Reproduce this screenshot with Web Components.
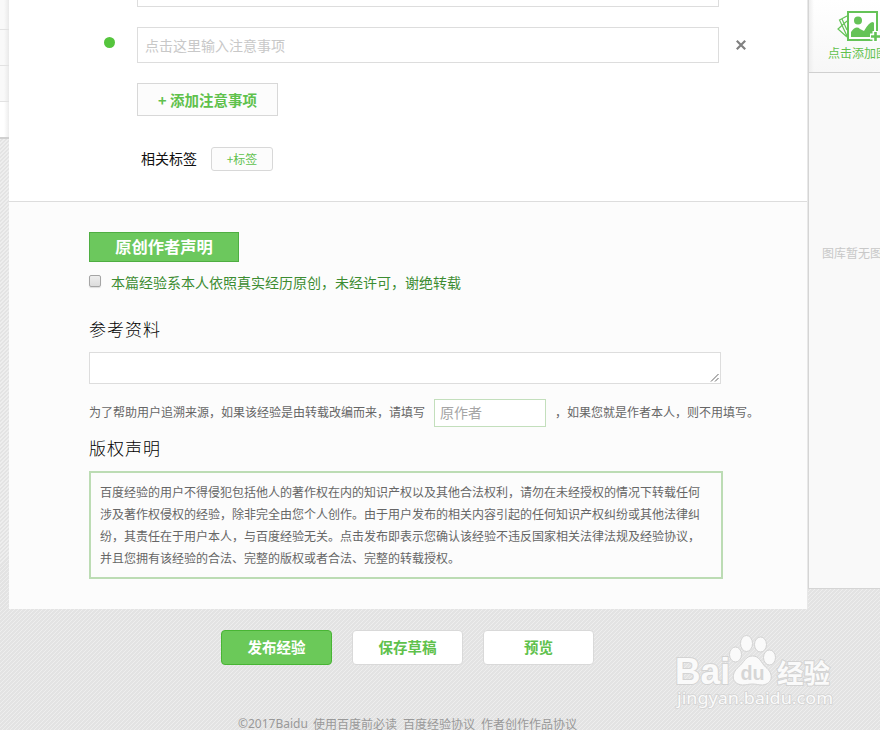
<!DOCTYPE html>
<html lang="zh-CN">
<head>
<meta charset="utf-8">
<title>百度经验</title>
<style>
  * { box-sizing: border-box; }
  body {
    margin: 0;
    width: 880px;
    height: 730px;
    overflow: hidden;
    position: relative;
    color: #666;
    font: 12px/22px "Noto Sans CJK SC", sans-serif;
    background: repeating-linear-gradient(135deg, #e3e3e3 0 1.9px, #eee 1.9px 2.83px);
  }
  .page { display: flex; height: 609px; align-items: flex-start; }
</style>
</head>
<body>
<div class="page">
  <side-steps></side-steps>
  <exp-editor></exp-editor>
  <photo-library></photo-library>
</div>
<action-bar>
  <exp-button primary>发布经验</exp-button>
  <exp-button>保存草稿</exp-button>
  <exp-button>预览</exp-button>
</action-bar>
<page-footer></page-footer>
<exp-logo></exp-logo>

<script>
function define(name, html) {
  customElements.define(name, class extends HTMLElement {
    connectedCallback() {
      this.attachShadow({ mode: 'open' });
      this.shadowRoot.innerHTML = '<style>*{box-sizing:border-box}</style>' + html;
    }
  });
}

define('exp-button', `
  <style>
    :host {
      display: block;
      box-sizing: border-box;
      width: 111px;
      height: 35px;
      border: 1px solid #d9d9d9;
      border-radius: 4px;
      background: #fff;
      color: #5fc14c;
      font-size: 14.5px;
      font-weight: bold;
      line-height: 32px;
      text-align: center;
    }
    :host([primary]) { background: #6bc959; border-color: #48b534; color: #fff; }
  </style>
  <slot></slot>
`);

define('action-bar', `
  <style>
    :host { display: flex; gap: 20px; padding: 21px 0 0 221px; }
  </style>
  <slot></slot>
`);

// left navigation, only its right edge is on screen
define('side-steps', `
  <style>
    :host { display: block; flex: none; width: 9px; }
    .step { height: 36px; border-bottom: 1px solid #e2e2e2; background: linear-gradient(90deg, #f9f9f9 4px, #e9e9e9); }
    .step.first { height: 30px; }
    .step.on { background: linear-gradient(90deg, #fff 4px, #ececec); border-bottom: 2px solid #d0d0d0; height: 37px; }
  </style>
  <div class="step first"></div>
  <div class="step"></div>
  <div class="step"></div>
  <div class="step on"></div>
`);

define('note-item', `
  <style>
    :host { display: flex; align-items: center; height: 36px; margin-top: 20px; }
    .dot { width: 11px; height: 11px; border-radius: 50%; background: #55c53d; margin: 0 22px 6px 95px; }
    .input {
      width: 582px;
      height: 36px;
      margin-right: 17px;
      padding-left: 7px;
      border: 1px solid #ddd;
      background: #fff;
      color: #c8c8c8;
      font-size: 14px;
      line-height: 35px;
    }
  </style>
  <div class="dot"></div>
  <div class="input"><slot></slot></div>
  <svg width="10" height="10"><path d="M.8.8l8.400 8.400M9.200.8L.8 9.200" stroke="#808080" stroke-width="2.2"/></svg>
`);

define('notes-section', `
  <style>
    :host { display: block; height: 202px; background: #fff; border-bottom: 1px solid #ddd; }
    .prev { height: 7px; width: 582px; margin-left: 128px; border: 1px solid #ddd; border-top: 0; }
    .add {
      width: 141px;
      height: 33px;
      margin: 20px 0 0 128px;
      border: 1px solid #d8d8d8;
      background: #fcfcfc;
      color: #5fc14c;
      font-size: 14.5px;
      font-weight: bold;
      line-height: 31px;
      text-align: center;
    }
    .tags { display: flex; align-items: center; gap: 14px; margin: 31px 0 0 132px; height: 24px; color: #111; font-size: 14px; line-height: 22px; }
    .name { margin-bottom: 2px; }
    .tag {
      width: 62px;
      height: 24px;
      border: 1px solid #d8d8d8;
      border-radius: 3px;
      background: #fcfcfc;
      color: #5fc14c;
      font-size: 12px;
      text-align: center;
    }
  </style>
  <div class="prev"></div>
  <note-item>点击这里输入注意事项</note-item>
  <div class="add">+ 添加注意事项</div>
  <div class="tags"><span class="name">相关标签</span><span class="tag">+标签</span></div>
`);

define('statement-section', `
  <style>
    :host { display: block; height: 407px; padding: 30px 0 0 80px; background: #fcfcfc; }
    .badge {
      width: 150px;
      height: 30px;
      border: 1px solid #4fae42;
      background: #6cc85d;
      color: #fff;
      font-size: 16.3px;
      font-weight: bold;
      line-height: 27px;
      text-align: center;
    }
    .agree { display: flex; align-items: center; gap: 10px; height: 22px; margin-top: 9px; color: #3c8c32; font-size: 14px; }
    .check {
      width: 12px;
      height: 12px;
      margin-bottom: 3px;
      border: 1px solid #a5a5a5;
      border-radius: 2px;
      background: linear-gradient(#eee, #dcdcdc);
      box-shadow: 0 1px 1px #ddd;
    }
    h3 { margin: 0; height: 24px; color: #000; font-size: 17px; letter-spacing: 1px; font-weight: 300; line-height: 24px; }
    .refs { margin-top: 24px; }
    .area {
      display: flex;
      align-items: flex-end;
      justify-content: flex-end;
      width: 632px;
      height: 32px;
      margin-top: 11px;
      padding: 1px;
      border: 1px solid #ddd;
      background: #fff;
    }
    .source { display: flex; align-items: center; height: 28px; margin-top: 15px; line-height: 20px; white-space: nowrap; }
    .text { margin-bottom: 2px; }
    .author {
      width: 112px;
      height: 28px;
      margin: 0 9px;
      padding-left: 5px;
      border: 1px solid #c3dfbc;
      background: #fff;
      color: #a5a5a5;
      font-size: 14px;
      line-height: 25px;
    }
    .copy { margin-top: 9px; }
    .legal {
      width: 634px;
      height: 108px;
      margin-top: 11px;
      padding: 8px 9px;
      border: 2px solid #bcdcb4;
      white-space: nowrap;
    }
  </style>
  <div class="badge">原创作者声明</div>
  <div class="agree"><span class="check"></span><span>本篇经验系本人依照真实经历原创，未经许可，谢绝转载</span></div>
  <h3 class="refs">参考资料</h3>
  <div class="area"><svg width="9" height="9"><path d="M1 8.5L8.5 1M5 8.5L8.5 5" stroke="#555" stroke-width=".9"/></svg></div>
  <div class="source">
    <span class="text">为了帮助用户追溯来源，如果该经验是由转载改编而来，请填写</span>
    <span class="author">原作者</span>
    <span class="text">，如果您就是作者本人，则不用填写。</span>
  </div>
  <h3 class="copy">版权声明</h3>
  <div class="legal">百度经验的用户不得侵犯包括他人的著作权在内的知识产权以及其他合法权利，请勿在未经授权的情况下转载任何<br>涉及著作权侵权的经验，除非完全由您个人创作。由于用户发布的相关内容引起的任何知识产权纠纷或其他法律纠<br>纷，其责任在于用户本人，与百度经验无关。点击发布即表示您确认该经验不违反国家相关法律法规及经验协议，<br>并且您拥有该经验的合法、完整的版权或者合法、完整的转载授权。</div>
`);

define('exp-editor', `
  <style>
    :host { display: block; flex: none; width: 799px; border-right: 1px solid #e8e8e8; }
  </style>
  <notes-section></notes-section>
  <statement-section></statement-section>
`);

// narrow panel, its contents are clipped at the right
define('photo-library', `
  <style>
    :host {
      display: block;
      flex: none;
      width: 72px;
      height: 589px;
      overflow: hidden;
      border: solid #d5d5d5;
      border-width: 0 0 1px 1px;
      background: #f9f9f9;
      white-space: nowrap;
    }
    .add {
      height: 73px;
      padding: 9px 0 0 19px;
      border-bottom: 1px solid #d0d0d0;
      background: linear-gradient(90deg, #eee, #fff0 5px), linear-gradient(#fff, #f7f7f7);
      color: #5fc14c;
      line-height: 20px;
    }
    .add svg { display: block; margin-left: 9px; }
    .empty { margin: 169px 0 0 13px; color: #c8c8c8; }
  </style>
  <div class="add">
    <svg width="44" height="34" fill="none">
      <path d="M10 7L2.5 11l7.5 16M10 12L1 20l9 8M5 10l5 11" stroke="#65c357" stroke-width="1.2"/>
      <rect x="11" y="3" width="29" height="28" fill="#fff" stroke="#65c357" stroke-width="2"/>
      <circle cx="21" cy="11.5" r="4" fill="#65c357"/>
      <path d="M14 28v-5q5-7 9-3l4 2q5-9 9-9l1 1v14z" fill="#65c357"/>
      <path d="M33 27.5h11M38.5 22v11" stroke="#fff" stroke-width="6"/>
      <path d="M34 27.5h9M38.5 23v9" stroke="#65c357" stroke-width="2.6"/>
    </svg>
    <div>点击添加图片</div>
  </div>
  <div class="empty">图库暂无图片</div>
`);

define('page-footer', `
  <style>
    :host { display: flex; gap: 6px; margin: 48px 0 0 238px; color: #999; white-space: nowrap; }
    .c { font-family: "Noto Sans", sans-serif; width: 69px; }
  </style>
  <span class="c">©2017Baidu</span><span>使用百度前必读</span><span>百度经验协议</span><span>作者创作作品协议</span>
`);

define('exp-logo', `
  <style>
    :host { display: block; position: absolute; left: 670px; top: 630px; width: 170px; height: 84px; }
    text { paint-order: stroke; stroke: #d3d3d3; stroke-width: 2px; fill: #fafafa; }
  </style>
  <svg width="170" height="84">
    <text x="5" y="53.5" font-family="Liberation Sans, sans-serif" font-size="36" font-weight="bold" textLength="55" lengthAdjust="spacingAndGlyphs">Bai</text>
    <g fill="#fafafa" stroke="#d3d3d3">
      <ellipse cx="65.5" cy="24.5" rx="6" ry="7.5"/>
      <ellipse cx="76.5" cy="13.5" rx="6" ry="8"/>
      <ellipse cx="90.5" cy="14.5" rx="6" ry="7.5"/>
      <ellipse cx="99.5" cy="27.5" rx="6" ry="7.5"/>
      <path d="M82.500 26c7 0 8 6 13 11 9 7 7 17-3 18-4 0-6-1-10-1s-6 1-10 1c-11-1-12-11-4-18 6-5 7-11 14-11z"/>
    </g>
    <text x="70.5" y="50" font-family="Liberation Sans, sans-serif" font-size="20" font-weight="bold" textLength="24" lengthAdjust="spacingAndGlyphs" style="fill:#d6d6d6;stroke:none">du</text>
    <text x="107" y="52.5" font-family="Noto Sans CJK SC, sans-serif" font-size="26.5" font-weight="bold">经验</text>
    <text x="7" y="74" font-family="Noto Sans, sans-serif" font-size="15.5" textLength="156" lengthAdjust="spacingAndGlyphs" style="stroke-width:1.5px">jingyan.baidu.com</text>
  </svg>
`);
</script>
</body>
</html>
